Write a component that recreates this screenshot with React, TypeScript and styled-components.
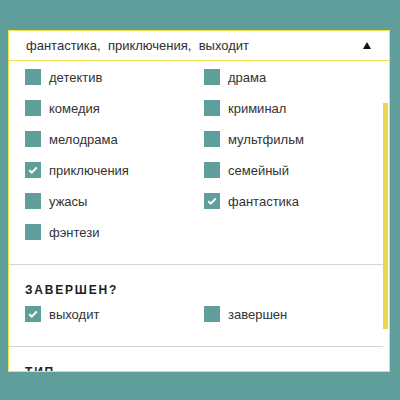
import React from "react";
import styled, { createGlobalStyle } from "styled-components";

const Global = createGlobalStyle`
  html, body { margin: 0; padding: 0; }
  body {
    background: #5f9e9b;
    width: 400px;
    height: 400px;
    overflow: hidden;
    font-family: "Liberation Sans", Arial, sans-serif;
    color: #333;
  }
`;

const Page = styled.div`
  padding: 30px 10px 0 8px;
`;

const Panel = styled.div`
  position: relative;
  width: 380px;
  height: 340px;
  background: #fff;
  border: 1px solid #f0e04a;
  display: flex;
  flex-direction: column;
`;

const Header = styled.div`
  height: 29px;
  border-bottom: 1px solid #f0e04a;
  display: flex;
  align-items: center;
  justify-content: space-between;
  padding: 0 18px 0 17px;
  font-size: 13px;
  color: #2e2e2e;
  white-space: pre;
`;

const Triangle = styled.span`
  width: 0;
  height: 0;
  border-left: 4.5px solid transparent;
  border-right: 4.5px solid transparent;
  border-bottom: 7px solid #111;
`;

const Body = styled.div`
  flex: 1;
  overflow: hidden;
  padding-right: 6px;
`;

const Section = styled.div<{ $pb: number }>`
  padding: 0 0 ${(p) => p.$pb}px 16px;
  border-bottom: 1px solid #d4d4d4;
`;

const Grid = styled.div`
  display: grid;
  grid-template-columns: 179px 1fr;
`;

const Row = styled.label`
  height: 31px;
  padding-top: 1px;
  box-sizing: border-box;
  display: flex;
  align-items: center;
  gap: 8px;
  font-size: 13px;
  color: #333;
`;

const Box = styled.span`
  width: 16px;
  height: 16px;
  background: #5f9e9b;
  display: flex;
  align-items: center;
  justify-content: center;
  flex-shrink: 0;
`;

const Heading = styled.div<{ $pt: number }>`
  padding-top: ${(p) => p.$pt}px;
  font-size: 12px;
  font-weight: bold;
  letter-spacing: 1.8px;
  color: #1e1e1e;
  line-height: 16px;
`;

const Thumb = styled.div`
  position: absolute;
  right: 1px;
  top: 72px;
  width: 5px;
  height: 226px;
  background: #e9d84c;
`;

const Check = () => (
  <svg width="10" height="8" viewBox="0 0 10 8">
    <path d="M1.2 4.2 L3.8 6.6 L8.8 1.4" fill="none" stroke="#fff" strokeWidth="2" />
  </svg>
);

const Item = ({ label, checked }: { label: string; checked?: boolean }) => (
  <Row>
    <Box>{checked && <Check />}</Box>
    {label}
  </Row>
);

const genres: [string, boolean][] = [
  ["детектив", false],
  ["драма", false],
  ["комедия", false],
  ["криминал", false],
  ["мелодрама", false],
  ["мультфильм", false],
  ["приключения", true],
  ["семейный", false],
  ["ужасы", false],
  ["фантастика", true],
  ["фэнтези", false],
];

export default function App() {
  return (
    <Page>
      <Global />
      <Panel>
        <Header>
          <span>{"фантастика,  приключения,  выходит"}</span>
          <Triangle />
        </Header>
        <Body>
          <Section $pb={17}>
            <Grid>
              {genres.map(([g, c]) => (
                <Item key={g} label={g} checked={c} />
              ))}
            </Grid>
          </Section>
          <Section $pb={17}>
            <Heading $pt={17}>ЗАВЕРШЕН?</Heading>
            <Grid>
              <Item label="выходит" checked />
              <Item label="завершен" />
            </Grid>
          </Section>
          <Section $pb={10}>
            <Heading $pt={17}>ТИП</Heading>
          </Section>
        </Body>
        <Thumb />
      </Panel>
    </Page>
  );
}
